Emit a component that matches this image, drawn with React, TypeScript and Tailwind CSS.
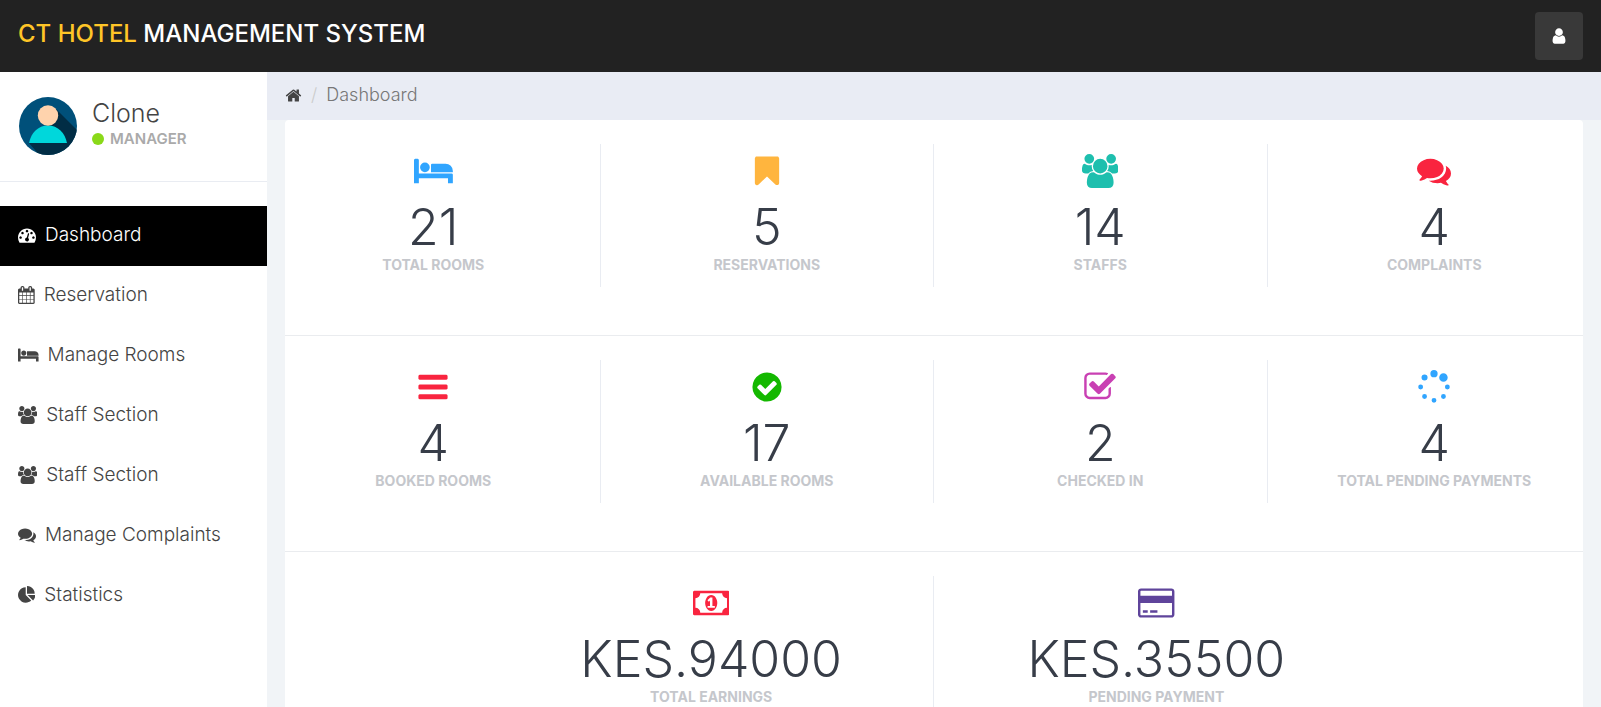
import React from "react";

type Glyph = { w: number; d: string };

const circle = (cx: number, cy: number, r: number) =>
  `M${cx - r} ${cy}a${r} ${r} 0 1 0 ${2 * r} 0a${r} ${r} 0 1 0 ${-2 * r} 0z`;

const glyphs = {
  bars: {
    w: 1792,
    d: "M1664 1344v128q0 26-19 45t-45 19h-1408q-26 0-45-19t-19-45v-128q0-26 19-45t45-19h1408q26 0 45 19t19 45zm0-512v128q0 26-19 45t-45 19h-1408q-26 0-45-19t-19-45v-128q0-26 19-45t45-19h1408q26 0 45 19t19 45zm0-512v128q0 26-19 45t-45 19h-1408q-26 0-45-19t-19-45v-128q0-26 19-45t45-19h1408q26 0 45 19t19 45z",
  },
  bookmark: {
    w: 1792,
    d: "M1420 128q23 0 44 9 33 13 52.5 41t19.5 62v1289q0 34-19.5 62t-52.5 41q-19 8-44 8-48 0-83-32l-441-424-441 424q-36 33-83 33-23 0-44-9-33-13-52.5-41t-19.5-62v-1289q0-34 19.5-62t52.5-41q21-9 44-9h1048z",
  },
  checkCircle: {
    w: 1792,
    d: "M1412 734q0-28-18-46l-91-90q-19-19-45-19t-45 19l-408 407-226-226q-19-19-45-19t-45 19l-91 90q-18 18-18 46 0 27 18 45l362 362q19 19 45 19 27 0 46-19l543-543q18-18 18-45zm252 162q0 209-103 385.5t-279.5 279.5-385.5 103-385.5-103-279.5-279.5-103-385.5 103-385.5 279.5-279.5 385.5-103 385.5 103 279.5 279.5 103 385.5z",
  },
  checkSquare: {
    w: 1792,
    d: "M1472 930v318q0 119-84.5 203.5t-203.5 84.5h-832q-119 0-203.5-84.5t-84.5-203.5v-832q0-119 84.5-203.5t203.5-84.5h832q63 0 117 25 15 7 18 23 3 17-9 29l-49 49q-10 10-23 10-3 0-9-2-23-6-45-6h-832q-66 0-113 47t-47 113v832q0 66 47 113t113 47h832q66 0 113-47t47-113v-254q0-13 9-22l64-64q10-10 23-10 6 0 12 3 20 8 20 29zm231-489l-814 814q-24 24-57 24t-57-24l-430-430q-24-24-24-57t24-57l110-110q24-24 57-24t57 24l263 263 647-647q24-24 57-24t57 24l110 110q24 24 24 57t-24 57z",
  },
  spinner: {
    w: 1792,
    d: [
      circle(896, 192, 192),
      circle(1394, 398, 224),
      circle(1600, 896, 128),
      circle(1394, 1394, 128),
      circle(896, 1600, 128),
      circle(398, 1394, 128),
      circle(192, 896, 128),
      circle(398, 398, 160),
    ].join(""),
  },
  comments: {
    w: 1792,
    d: "M1408 768q0 139-94 257t-256.5 186.5-353.5 68.5q-86 0-176-16-124 88-278 128-36 9-86 16h-3q-11 0-20.5-8t-11.5-21q-1-3-1-6.5t.5-6.5 2-6l2.5-5t3.5-5.5 4-5 4.5-5 4-4.5q5-6 23-25t26-29.5 22.5-29 25-38.5 20.5-44q-124-72-195-177t-71-224q0-139 94-257t256.5-186.5 353.5-68.5 353.5 68.5 256.5 186.5 94 257zm384 256q0 120-71 224.5t-195 176.5q10 24 20.5 44t25 38.5 22.5 29 26 29.5 23 25q1 1 4 4.5t4.5 5 4 5 3.5 5.5l2.5 5t2 6 .5 6.5-1 6.5q-3 14-13 22t-22 7q-50-7-86-16-154-40-278-128-90 16-176 16-271 0-472-132 58 4 88 4 161 0 309-45t264-129q125-92 192-212t67-254q0-77-23-152 129 71 204 178t75 230z",
  },
  users: {
    w: 1920,
    d: "M593 896q-162 5-265 128h-134q-82 0-138-40.5t-56-118.5q0-353 124-353 6 0 43.5 21t97.5 42.5 119 21.5q67 0 133-23-5 37-5 66 0 139 81 256zm1071 637q0 120-73 189.5t-194 69.5h-874q-121 0-194-69.5t-73-189.5q0-53 3.5-103.5t14-109 26.5-108.5 43-97.5 62-81 85.5-53.5 111.5-20q10 0 43 21.5t73 48 107 48 135 21.5 135-21.5 107-48 73-48 43-21.5q61 0 111.5 20t85.5 53.5 62 81 43 97.5 26.5 108.5 14 109 3.5 103.5zm-1024-1277q0 106-75 181t-181 75-181-75-75-181 75-181 181-75 181 75 75 181zm704 384q0 159-112.5 271.5t-271.5 112.5-271.5-112.5-112.5-271.5 112.5-271.5 271.5-112.5 271.5 112.5 112.5 271.5zm576 225q0 78-56 118.5t-138 40.5h-134q-103-123-265-128 81-117 81-256 0-29-5-66 66 23 133 23 59 0 119-21.5t97.5-42.5 43.5-21q124 0 124 353zm-128-609q0 106-75 181t-181 75-181-75-75-181 75-181 181-75 181 75 75 181z",
  },
  bed: {
    w: 2048,
    d: "M256 1024h1728q26 0 45 19t19 45v448h-256v-256h-1536v256h-256v-1216q0-26 19-45t45-19h128q26 0 45 19t19 45v704zm576-320q0-106-75-181t-181-75-181 75-75 181 75 181 181 75 181-75 75-181zm1216 256v-64q0-159-112.5-271.5t-271.5-112.5h-704q-26 0-45 19t-19 45v384h1152z",
  },
  money: {
    w: 1920,
    d: "M768 1152h384v-96h-128v-448h-114l-148 137 77 80q42-37 55-57h2v288h-128v96zm512-256q0 70-21 142t-59.5 134-101.5 101-138 39-138-39-101.5-101-59.5-134-21-142 21-142 59.5-134 101.5-101 138-39 138 39 101.5 101 59.5 134 21 142zm512 256v-512q-106 0-181-75t-75-181h-1152q0 106-75 181t-181 75v512q106 0 181 75t75 181h1152q0-106 75-181t181-75zm128-832v1152q0 26-19 45t-45 19h-1792q-26 0-45-19t-19-45v-1152q0-26 19-45t45-19h1792q26 0 45 19t19 45z",
  },
  card: {
    w: 1920,
    d: "M1760 128q66 0 113 47t47 113v1216q0 66-47 113t-113 47h-1600q-66 0-113-47t-47-113v-1216q0-66 47-113t113-47h1600zm-1600 128q-13 0-22.5 9.5t-9.5 22.5v224h1664v-224q0-13-9.5-22.5t-22.5-9.5h-1600zm1600 1280q13 0 22.5-9.5t9.5-22.5v-608h-1664v608q0 13 9.5 22.5t22.5 9.5h1600zm-1504-128v-128h256v128h-256zm384 0v-128h384v128h-384z",
  },
  user: {
    w: 1792,
    d: "M1536 1399q0 109-62.5 187t-150.5 78h-854q-88 0-150.5-78t-62.5-187q0-85 8.5-160.5t31.5-152 58.5-131 94-89 134.5-34.5q131 128 313 128t313-128q76 0 134.5 34.5t94 89 58.5 131 31.5 152 8.5 160.5zm-256-887q0 159-112.5 271.5t-271.5 112.5-271.5-112.5-112.5-271.5 112.5-271.5 271.5-112.5 271.5 112.5 112.5 271.5z",
  },
  home: {
    w: 1792,
    d: "M1472 992v480q0 26-19 45t-45 19h-384v-384h-256v384h-384q-26 0-45-19t-19-45v-480q0-1 .5-3t.5-3l575-474 575 474q1 2 1 6zm223-69l-62 74q-8 9-21 11h-3q-13 0-21-7l-692-577-692 577q-12 8-24 7-13-2-21-11l-62-74q-8-10-7-23.5t11-21.5l719-599q32-26 76-26t76 26l244 204v-195q0-14 9-23t23-9h192q14 0 23 9t9 23v408l219 182q10 8 11 21.5t-7 23.5z",
  },
  gauge: {
    w: 1792,
    d: "M384 1152q0-53-37.5-90.5t-90.5-37.5-90.5 37.5-37.5 90.5 37.5 90.5 90.5 37.5 90.5-37.5 37.5-90.5zm192-448q0-53-37.5-90.5t-90.5-37.5-90.5 37.5-37.5 90.5 37.5 90.5 90.5 37.5 90.5-37.5 37.5-90.5zm428 481l101-382q6-26-7.5-48.5t-38.5-29.5-48 6.5-30 39.5l-101 382q-60 5-107 43.5t-63 98.5q-20 77 20 146t117 89 146-20 89-117q16-60-6-117t-72-91zm660-33q0-53-37.5-90.5t-90.5-37.5-90.5 37.5-37.5 90.5 37.5 90.5 90.5 37.5 90.5-37.5 37.5-90.5zm-640-640q0-53-37.5-90.5t-90.5-37.5-90.5 37.5-37.5 90.5 37.5 90.5 90.5 37.5 90.5-37.5 37.5-90.5zm448 192q0-53-37.5-90.5t-90.5-37.5-90.5 37.5-37.5 90.5 37.5 90.5 90.5 37.5 90.5-37.5 37.5-90.5zm320 448q0 261-141 483-19 29-54 29h-1402q-35 0-54-29-141-221-141-483 0-182 71-348t191-286 286-191 348-71 348 71 286 191 191 286 71 348z",
  },
  calendar: {
    w: 1664,
    d: "M128 1664h288v-288h-288v288zm352 0h320v-288h-320v288zm-352-352h288v-320h-288v320zm352 0h320v-320h-320v320zm-352-384h288v-288h-288v288zm736 736h320v-288h-320v288zm-384-736h320v-288h-320v288zm768 736h288v-288h-288v288zm-384-352h320v-320h-320v320zm-352-864v-288q0-13-9.5-22.5t-22.5-9.5h-64q-13 0-22.5 9.5t-9.5 22.5v288q0 13 9.5 22.5t22.5 9.5h64q13 0 22.5-9.5t9.5-22.5zm736 864h288v-320h-288v320zm-384-384h320v-288h-320v288zm384 0h288v-288h-288v288zm32-480v-288q0-13-9.5-22.5t-22.5-9.5h-64q-13 0-22.5 9.5t-9.5 22.5v288q0 13 9.5 22.5t22.5 9.5h64q13 0 22.5-9.5t9.5-22.5zm384-64v1280q0 52-38 90t-90 38h-1408q-52 0-90-38t-38-90v-1280q0-52 38-90t90-38h128v-96q0-66 47-113t113-47h64q66 0 113 47t47 113v96h384v-96q0-66 47-113t113-47h64q66 0 113 47t47 113v96h128q52 0 90 38t38 90z",
  },
  pie: {
    w: 1728,
    d: "M768 890l546 546q-106 108-247.5 168t-298.5 60q-209 0-385.5-103t-279.5-279.5-103-385.5 103-385.5 279.5-279.5 385.5-103v762zm187 6h773q0 157-60 298.5t-168 247.5zm709-128h-768v-768q209 0 385.5 103t279.5 279.5 103 385.5z",
  },
} satisfies Record<string, Glyph>;

type IconName = keyof typeof glyphs;

function Icon({ name, className }: { name: IconName; className: string }) {
  const g = glyphs[name];
  return (
    <svg viewBox={`0 0 ${g.w} 1792`} className={`shrink-0 w-auto ${className}`} fill="currentColor" aria-hidden="true">
      <path d={g.d} />
    </svg>
  );
}

const menu: { icon: IconName; label: string; active?: boolean }[] = [
  { icon: "gauge", label: "Dashboard", active: true },
  { icon: "calendar", label: "Reservation" },
  { icon: "bed", label: "Manage Rooms" },
  { icon: "users", label: "Staff Section" },
  { icon: "users", label: "Staff Section" },
  { icon: "comments", label: "Manage Complaints" },
  { icon: "pie", label: "Statistics" },
];

type Stat = { icon: IconName; color: string; value: string; label: string };

const rooms: Stat[] = [
  { icon: "bed", color: "text-[#30a5ff]", value: "21", label: "Total Rooms" },
  { icon: "bookmark", color: "text-[#ffb53e]", value: "5", label: "Reservations" },
  { icon: "users", color: "text-[#1ebfae]", value: "14", label: "Staffs" },
  { icon: "comments", color: "text-[#f9243f]", value: "4", label: "Complaints" },
];

const bookings: Stat[] = [
  { icon: "bars", color: "text-[#f9243f]", value: "4", label: "Booked Rooms" },
  { icon: "checkCircle", color: "text-[#14b800]", value: "17", label: "Available Rooms" },
  { icon: "checkSquare", color: "text-[#c940b3]", value: "2", label: "Checked In" },
  { icon: "spinner", color: "text-[#30a5ff]", value: "4", label: "Total Pending Payments" },
];

const money: Stat[] = [
  { icon: "money", color: "text-[#f9243f]", value: "KES.94000", label: "Total Earnings" },
  { icon: "card", color: "text-[#5f449b]", value: "KES.35500", label: "Pending Payment" },
];

function StatCell({ stat }: { stat: Stat }) {
  return (
    <div className="flex h-[143px] flex-col items-center pt-2.5">
      <Icon name={stat.icon} className={`h-[34px] ${stat.color}`} />
      <div className="mt-3.5 text-[50px] leading-[50px] font-light text-[#373d48]">{stat.value}</div>
      <div className="mt-[3px] text-sm leading-5 font-bold text-[#c5c7cc] uppercase">{stat.label}</div>
    </div>
  );
}

function Avatar() {
  return (
    <svg viewBox="0 0 58 58" className="size-[58px] shrink-0" role="img" aria-label="Clone">
      <defs>
        <clipPath id="avatar-disc">
          <circle cx="29" cy="29" r="29" />
        </clipPath>
      </defs>
      <g clipPath="url(#avatar-disc)">
        <rect width="58" height="58" fill="#00507a" />
        <path d="M36 11 60 35v25H22L10 46l19-18z" fill="#012d45" />
        <path d="M10 46C12 36 19 28.500 29 28.500S46 36 48 46z" fill="#00d7db" />
        <circle cx="29" cy="18.500" r="10.200" fill="#ffd3ad" />
      </g>
    </svg>
  );
}

export default function App() {
  return (
    <div className="flex h-screen flex-col overflow-hidden bg-[#f1f4f7] font-['Inter','Open_Sans',sans-serif] font-light text-[#444]">
      <header className="flex h-[72px] shrink-0 items-center justify-between bg-[#222] px-[18px]">
        <a href="#" className="pb-1 text-2xl font-medium text-white">
          <span className="text-[#ffc527]">CT HOTEL</span> MANAGEMENT SYSTEM
        </a>
        <button type="button" aria-label="Account" className="flex size-12 items-center justify-center rounded bg-[#393939] text-white">
          <Icon name="user" className="h-[18px]" />
        </button>
      </header>

      <div className="flex min-h-0 flex-1">
        <aside className="w-[267px] shrink-0 bg-white">
          <div className="flex h-[110px] gap-[15px] border-b border-[#e9ecf2] px-[19px] pt-[25px]">
            <Avatar />
            <div>
              <div className="text-[25px] leading-8">Clone</div>
              <div className="flex items-center gap-1.5 text-[15px] leading-5 font-semibold text-[#aaa]">
                <span className="size-3 rounded-full bg-[#8ad919]" />
                MANAGER
              </div>
            </div>
          </div>
          <nav className="mt-6 flex flex-col">
            {menu.map((item, i) => (
              <a
                key={i}
                href="#"
                className={`flex h-[60px] items-center gap-[9px] px-[18px] pb-0.5 text-[19px] ${item.active ? "bg-black text-white" : ""}`}
              >
                <Icon name={item.icon} className="h-[18px]" />
                {item.label}
              </a>
            ))}
          </nav>
        </aside>

        <main className="min-w-0 flex-1 overflow-x-hidden overflow-y-auto [scrollbar-width:none]">
          <nav aria-label="Breadcrumb" className="flex h-12 items-center gap-[9px] bg-[#e9ecf4] px-[18px] pb-0.5 text-lg">
            <a href="#" aria-label="Home">
              <Icon name="home" className="h-[17px]" />
            </a>
            <span className="text-[#ccc]">/</span>
            <span className="text-[#777]">Dashboard</span>
          </nav>
          <section className="mx-[18px] mb-6 rounded bg-white">
            {[rooms, bookings].map((row, i) => (
              <div key={i} className="border-b border-[#eaecef] pt-6 pb-12">
                <div className="-mx-[18px] grid grid-cols-4">
                  {row.map((stat) => (
                    <div key={stat.label} className="border-r border-[#e9ecf2] last:border-r-0">
                      <StatCell stat={stat} />
                    </div>
                  ))}
                </div>
              </div>
            ))}
            <div className="pt-6 pb-12">
              <div className="-mx-[18px] flex justify-center">
                {money.map((stat) => (
                  <div key={stat.label} className="w-1/3 border-r border-[#e9ecf2] last:border-r-0">
                    <StatCell stat={stat} />
                  </div>
                ))}
              </div>
            </div>
          </section>
        </main>
      </div>
    </div>
  );
}
